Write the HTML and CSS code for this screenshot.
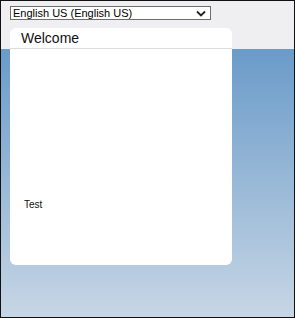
FILE: index.html
```html
<!DOCTYPE html>
<html>
<head>
<meta charset="utf-8">
<link rel="stylesheet" href="styles.css">
</head>
<body>
<div class="frame">
  <div class="lang">
    <span class="lang-text">English US (English US)</span>
    <svg class="chev" width="10" height="7" viewBox="0 0 10 7"><path d="M1 1.5 L5 5.5 L9 1.5" fill="none" stroke="#222" stroke-width="1.8"/></svg>
  </div>
  <div class="card">
    <div class="card-head">Welcome</div>
    <div class="card-body">
      <div class="test">Test</div>
    </div>
  </div>
</div>
</body>
</html>
```
FILE: styles.css
```css
html, body { margin: 0; padding: 0; }
body { font-family: "Liberation Sans", Arial, sans-serif; }
.frame {
  width: 295px; height: 318px; box-sizing: border-box;
  border: 1px solid #111;
  background: linear-gradient(to bottom, #efeff1 0, #efeff1 48px, #6a9bc9 48px, #c7d6e5 100%);
  padding: 5px 0 0 9px;
  display: flex; flex-direction: column; align-items: flex-start;
}
.lang {
  width: 201px; height: 14px; box-sizing: border-box;
  border: 1px solid #6d6d6d; background: #fff;
  display: flex; align-items: center; justify-content: space-between;
  padding: 0 4px 0 2px;
  font-size: 11px; color: #000;
}
.lang-text { line-height: 12px; }
.chev { display: block; }
.card {
  margin-top: 8px;
  width: 222px; height: 237px;
  background: #fff; border-radius: 6px;
  display: flex; flex-direction: column;
}
.card-head {
  height: 20px; box-sizing: content-box;
  border-bottom: 1px solid #dcdcdc;
  padding-left: 11px;
  font-size: 14px; line-height: 20px; color: #111;
}
.card-body { padding: 150px 0 0 14px; }
.test { font-size: 10px; color: #111; line-height: 12px; }
```
